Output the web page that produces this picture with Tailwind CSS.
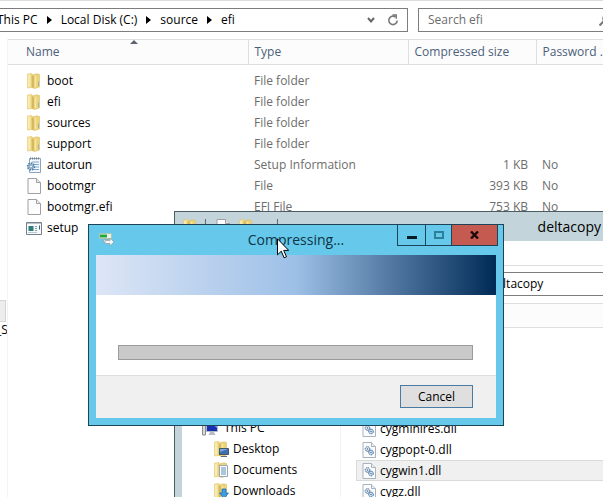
<!DOCTYPE html>
<html lang="en">
<head>
    <meta charset="UTF-8">
    <meta name="viewport" content="width=device-width, initial-scale=1.0">
    <title>efi</title>
    <script src="https://cdn.jsdelivr.net/npm/@tailwindcss/browser@4"></script>
</head>
<body class="relative h-screen overflow-hidden bg-white font-['Open_Sans','Noto_Sans',sans-serif] text-xs text-black">

    <!-- shared icons -->
    <svg class="hidden">
        <symbol id="folder" viewBox="0 0 16 16">
            <path d="M1.500 1l4.500-.5v14l-4.500.5z" fill="#f3df92" stroke="#e0c76f" stroke-width=".6"/>
            <path d="M6 2l5-1.200 2.500.7v12.500l-5 1.500-2.500-1z" fill="#ecd27a" stroke="#d8bd62" stroke-width=".6"/>
            <path d="M7 3v11.500" stroke="#c2a24a" stroke-width="1"/>
            <path d="M3 1.800v12" stroke="#f9eebc" stroke-width="1.500"/>
            <path d="M9.500 2.800v11.500" stroke="#f7e6a2" stroke-width="1.500"/>
            <path d="M12.500 8.500v4.500" stroke="#9ab4b4" stroke-width="1"/>
        </symbol>
        <symbol id="page" viewBox="0 0 16 16">
            <path d="M2 .5h8.500l4 4v11H2z" fill="#fdfdfd" stroke="#a0a0a0"/>
            <path d="M10.500.5v4h4" fill="#e8e8e8" stroke="#a0a0a0"/>
        </symbol>
        <symbol id="dll" viewBox="0 0 16 16">
            <path d="M2 .5h8.500l4 4v11H2z" fill="#fbfcfd" stroke="#a9b3bb"/>
            <path d="M10.500.5v4h4" fill="#e8edf0" stroke="#a9b3bb"/>
            <circle cx="6.500" cy="7" r="2.300" fill="#dbe8f3" stroke="#44698f" stroke-dasharray="1.500 .5"/>
            <circle cx="10" cy="10.500" r="2.300" fill="#dbe8f3" stroke="#2f5f95" stroke-dasharray="1.500 .5"/>
            <circle cx="6.500" cy="7" r=".7" fill="#44698f"/>
            <circle cx="10" cy="10.500" r=".7" fill="#2f5f95"/>
        </symbol>
        <symbol id="inf" viewBox="0 0 16 16">
            <path d="M3.500 1.500h11v14h-11z" fill="#f4f8fc" stroke="#8da5b8"/>
            <path d="M4 1.500h10" stroke="#6c7f90" stroke-width="2" stroke-dasharray="1 1"/>
            <path d="M6 5h7M9 7.500h4M9 10h4M7 12.500h6" stroke="#7fa8cd"/>
            <circle cx="5" cy="9.500" r="3.300" fill="#a9c6de" stroke="#5580a5" stroke-width="1.800" stroke-dasharray="1.500 1"/>
            <circle cx="5" cy="9.500" r="1.500" fill="#eef4f9" stroke="#5b83a6" stroke-width=".7"/>
        </symbol>
        <symbol id="exe" viewBox="0 0 16 16">
            <path d="M.5 2.500h15v12H.5z" fill="#f8f9f9" stroke="#76828a"/>
            <path d="M1 3.500h14" stroke="#b8c3c9" stroke-width="1"/>
            <path d="M2.500 6h5v5h-5z" fill="#2d7f7c"/>
            <path d="M9 6.500h2M9 8.500h2M9 10.500h2" stroke="#8a9ba8"/>
            <path d="M13.500 5.500v4" stroke="#35628a"/>
            <path d="M2 12.500h9" stroke="#bcc8ce"/>
        </symbol>
        <symbol id="crumb" viewBox="0 0 5 8"><path d="M0 0l5 4-5 4z" fill="#000"/></symbol>
    </svg>

    <!-- efi window -->
    <main class="flex h-full flex-col border-t border-[#dcdcdc] pt-[7px]">
        <div class="flex h-6 shrink-0 gap-[10px]">
            <nav class="flex w-[408px] items-center overflow-hidden border border-l-0 border-[#7d7d7d] pr-2">
                <a href="#" class="-ml-[3px] whitespace-nowrap">This PC</a>
                <svg class="mx-[9px] h-2 w-[5px] shrink-0"><use href="#crumb"/></svg>
                <a href="#" class="whitespace-nowrap">Local Disk (C:)</a>
                <svg class="mx-[9px] h-2 w-[5px] shrink-0"><use href="#crumb"/></svg>
                <a href="#">source</a>
                <svg class="mx-[9px] h-2 w-[5px] shrink-0"><use href="#crumb"/></svg>
                <a href="#">efi</a>
                <button type="button" aria-label="Previous locations" class="mr-3 ml-auto">
                    <svg class="h-2 w-2" viewBox="0 0 8 8" fill="none" stroke="#666" stroke-width="2"><path d="M1 2l3 3.500L7 2"/></svg>
                </button>
                <button type="button" aria-label="Refresh">
                    <svg class="h-3 w-3" viewBox="0 0 12 12" fill="none" stroke="#777" stroke-width="1.600"><path d="M8.500 3A4.200 4.200 0 1 0 10.200 6.500"/><path d="M5.500 1h3.800v3.800" stroke-width="1.400"/></svg>
                </button>
            </nav>
            <label class="-mr-3 flex min-w-0 flex-1 items-center border border-[#7d7d7d] pl-[9px]">
                <input type="search" aria-label="Search efi" placeholder="Search efi" class="min-w-0 flex-1 outline-none placeholder:text-[#6d6d6d]">
                <svg class="h-3 w-3 shrink-0 mr-[3px]" viewBox="0 0 12 12" fill="none" stroke="#777"><circle cx="7.500" cy="4.500" r="3.500" stroke-width="1.500"/><path d="M5 7l-4.500 4.500" stroke-width="2"/></svg>
            </label>
        </div>

        <div class="mt-[7px] flex min-h-0 flex-1">
            <aside class="w-2 shrink-0 overflow-hidden border-r border-[#f3f3f3] pt-[261px]">
                <div class="-ml-1 h-[22px] w-[10px] border border-[#d4d4d4] bg-[#ededed]"></div>
                <div class="-ml-1 whitespace-nowrap">_S</div>
            </aside>
            <div class="min-w-0 flex-1">
                <table class="w-full table-fixed whitespace-nowrap text-[#6d6d6d]">
                    <colgroup><col class="w-[240px]"><col class="w-[160px]"><col class="w-32"><col></colgroup>
                    <thead>
                        <tr class="h-[25px] border-y border-[#dedfe1] bg-[#fcfcfc] text-left text-[#4c607a]">
                            <th class="relative border-r border-[#dedfe1] pl-[18px] font-normal">Name
                                <svg class="absolute top-0 left-[122px] h-1 w-2" viewBox="0 0 8 4"><path d="M0 4l4-4 4 4z" fill="#5b6470"/></svg>
                            </th>
                            <th class="border-r border-[#dedfe1] pl-[6px] font-normal">Type</th>
                            <th class="border-r border-[#dedfe1] pl-[6px] font-normal">Compressed size</th>
                            <th class="pl-[6px] font-normal">Password ..</th>
                        </tr>
                    </thead>
                    <tbody>
                        <tr class="h-[6px]"><td colspan="4"></td></tr>
                        <tr class="h-[21px]">
                            <td class="pl-[18px] text-black"><span class="flex items-center gap-[5px]"><svg class="h-4 w-4"><use href="#folder"/></svg>boot</span></td>
                            <td class="pl-[6px]">File folder</td><td></td><td></td>
                        </tr>
                        <tr class="h-[21px]">
                            <td class="pl-[18px] text-black"><span class="flex items-center gap-[5px]"><svg class="h-4 w-4"><use href="#folder"/></svg>efi</span></td>
                            <td class="pl-[6px]">File folder</td><td></td><td></td>
                        </tr>
                        <tr class="h-[21px]">
                            <td class="pl-[18px] text-black"><span class="flex items-center gap-[5px]"><svg class="h-4 w-4"><use href="#folder"/></svg>sources</span></td>
                            <td class="pl-[6px]">File folder</td><td></td><td></td>
                        </tr>
                        <tr class="h-[21px]">
                            <td class="pl-[18px] text-black"><span class="flex items-center gap-[5px]"><svg class="h-4 w-4"><use href="#folder"/></svg>support</span></td>
                            <td class="pl-[6px]">File folder</td><td></td><td></td>
                        </tr>
                        <tr class="h-[21px]">
                            <td class="pl-[18px] text-black"><span class="flex items-center gap-[5px]"><svg class="h-4 w-4"><use href="#inf"/></svg>autorun</span></td>
                            <td class="pl-[6px]">Setup Information</td><td class="pr-2 text-right">1 KB</td><td class="pl-[6px]">No</td>
                        </tr>
                        <tr class="h-[21px]">
                            <td class="pl-[18px] text-black"><span class="flex items-center gap-[5px]"><svg class="h-4 w-4"><use href="#page"/></svg>bootmgr</span></td>
                            <td class="pl-[6px]">File</td><td class="pr-2 text-right">393 KB</td><td class="pl-[6px]">No</td>
                        </tr>
                        <tr class="h-[21px]">
                            <td class="pl-[18px] text-black"><span class="flex items-center gap-[5px]"><svg class="h-4 w-4"><use href="#page"/></svg>bootmgr.efi</span></td>
                            <td class="pl-[6px]">EFI File</td><td class="pr-2 text-right">753 KB</td><td class="pl-[6px]">No</td>
                        </tr>
                        <tr class="h-[21px]">
                            <td class="pl-[18px] text-black"><span class="flex items-center gap-[5px]"><svg class="h-4 w-4"><use href="#exe"/></svg>setup</span></td>
                            <td></td><td></td><td></td>
                        </tr>
                    </tbody>
                </table>
            </div>
        </div>
    </main>

    <!-- deltacopy window -->
    <section class="absolute top-[211px] right-0 bottom-0 left-[174px] flex flex-col border-t border-l border-[#4b5d61] bg-[#c3d5da] pl-[7px]">
        <header class="flex h-[29px] shrink-0 items-center">
            <div class="flex items-center gap-[7px] self-start pt-[7px]">
                <svg class="h-4 w-4"><use href="#folder"/></svg>
                <span class="h-4 w-px bg-[#5c6d72]"></span>
                <svg class="ml-[2px] h-4 w-4"><use href="#page"/></svg>
                <svg class="h-4 w-4"><use href="#folder"/></svg>
                <span class="ml-4 h-4 w-px bg-[#5c6d72]"></span>
            </div>
            <h2 class="ml-auto pr-[2px] text-sm">deltacopy</h2>
        </header>
        <div class="flex min-h-0 flex-1 flex-col bg-white">
            <div class="h-[25px] shrink-0 border-b border-[#dcdcdc]"></div>
            <nav class="mt-[6px] flex h-6 shrink-0 items-center border-y border-[#7d7d7d] pl-[307px]"><a href="#">deltacopy</a></nav>
            <div class="mt-[7px] flex min-h-0 flex-1">
                <ul class="w-[159px] shrink-0 overflow-hidden border-r border-[#f3f3f3] pt-[114px]">
                    <li class="flex h-[21px] items-center gap-[6px] pl-5">
                        <svg class="h-4 w-4" viewBox="0 0 16 16"><path d="M.5 3h3v12h-3z" fill="#d8d8d8" stroke="#8c8c8c"/><path d="M4.500 3.500h11v8h-11z" fill="#1a2fb0" stroke="#aebcc8"/><path d="M10 4h5v4z" fill="#6fa4ea"/><path d="M8 12h4l1.500 3h-7z" fill="#b7bcc4"/></svg>This PC
                    </li>
                    <li class="flex h-[21px] items-center gap-1 pl-[31px]">
                        <svg class="h-4 w-4" viewBox="0 0 16 16"><use href="#folder"/><path d="M6.500 7.500h9v6h-9z" fill="#3b6fae" stroke="#44566b"/><path d="M7 8h8l-8 3z" fill="#79a5d8"/><path d="M8 15.500h6" stroke="#5d6a78"/></svg>Desktop
                    </li>
                    <li class="flex h-[21px] items-center gap-1 pl-[31px]">
                        <svg class="h-4 w-4" viewBox="0 0 16 16"><use href="#folder"/><path d="M6.500 3.500h8v11h-8z" fill="#fafcfd" stroke="#9aa7b2"/><path d="M8 6h5M8 8h5M8 10h5M8 12h5" stroke="#5f8fbd"/></svg>Documents
                    </li>
                    <li class="flex h-[21px] items-center gap-1 pl-[31px]">
                        <svg class="h-4 w-4" viewBox="0 0 16 16"><use href="#folder"/><path d="M9 6h4v4h2.500L11 15.500 6.500 10H9z" fill="#3b9ede" stroke="#1f70ad" stroke-width=".8"/></svg>Downloads
                    </li>
                </ul>
                <div class="min-w-0 flex-1">
                    <div class="h-[25px] border-y border-[#dedfe1] bg-[#fcfcfc]"></div>
                    <ul class="pt-[90px] pl-[15px]">
                        <li class="flex h-[21px] items-center gap-[3px] pl-[5px]"><svg class="h-4 w-4"><use href="#dll"/></svg>cygminires.dll</li>
                        <li class="flex h-[21px] items-center gap-[3px] pl-[5px]"><svg class="h-4 w-4"><use href="#dll"/></svg>cygpopt-0.dll</li>
                        <li class="flex h-[21px] items-center gap-[3px] border border-r-0 border-[#dadada] bg-[#f0f0f0] pl-1"><svg class="h-4 w-4"><use href="#dll"/></svg>cygwin1.dll</li>
                        <li class="flex h-[21px] items-center gap-[3px] pl-[5px]"><svg class="h-4 w-4"><use href="#dll"/></svg>cygz.dll</li>
                    </ul>
                </div>
            </div>
        </div>
    </section>

    <!-- progress dialog -->
    <section role="dialog" aria-labelledby="dialog-title" class="absolute top-[224px] left-[88px] w-[416px] border border-[#1d4456] bg-[#66c8ea] px-[7px] pb-[7px]">
        <header class="relative flex h-[30px] items-center justify-center">
            <svg class="absolute top-[7px] left-[3px] h-4 w-4" viewBox="0 0 16 16">
                <path d="M.5 1.500h12v5H.5z" fill="#e9f3ec" stroke="#a9c7b5"/>
                <path d="M1 2.500h7v3H1z" fill="#25a53a"/>
                <path d="M4.500 7.500h6v3h-6z" fill="#e4e8ea" stroke="#8fa0a8" stroke-width=".7"/>
                <path d="M6 8.500h5V6l4 4-4 4v-2.500H6z" fill="#f5f5f5" stroke="#8aa0a9" stroke-width=".7"/>
            </svg>
            <h1 id="dialog-title" class="text-sm text-[#0d3446]">Compressing...</h1>
            <div class="absolute top-0 -right-[2px] flex h-[21px] border border-t-0 border-[#1d4456]">
                <button type="button" aria-label="Minimize" class="flex w-[28px] items-center justify-center border-r border-[#1d4456]">
                    <svg class="h-[10px] w-[10px]" viewBox="0 0 10 10"><path d="M0 6h10v3H0z" fill="#061a24"/></svg>
                </button>
                <button type="button" aria-label="Maximize" class="flex w-[26px] items-center justify-center border-r border-[#1d4456]">
                    <svg class="h-2 w-[10px]" viewBox="0 0 10 8"><path d="M1 1h8v6H1z" fill="none" stroke="#2b7f9b" stroke-width="2"/></svg>
                </button>
                <button type="button" aria-label="Close" class="flex w-[45px] items-center justify-center bg-[#c55a50]">
                    <svg class="h-2 w-[9px]" viewBox="0 0 9 8"><path d="M1 .5l7 7M8 .5l-7 7" stroke="#1c0b0a" stroke-width="2.400"/></svg>
                </button>
            </div>
        </header>
        <div class="h-10 bg-linear-to-r/srgb from-[#dde6f6] via-[#9dc0e7] to-[#002a56]"></div>
        <div class="h-20 bg-white pt-[50px] pr-[23px] pl-[22px]">
            <progress aria-label="Compressing" value="0" max="100" class="block h-[15px] w-full appearance-none border border-[#9b9b9b] [&::-webkit-progress-bar]:bg-[#c9c9c9]"></progress>
        </div>
        <footer class="flex justify-end border-t border-[#dfdfdf] bg-[#f0f0f0] pt-[9px] pr-[23px] pb-[10px] pl-[22px]">
            <button type="button" class="h-[23px] w-[73px] border border-[#4a7ba5] bg-[#dfdfdf]">Cancel</button>
        </footer>
    </section>

    <!-- mouse pointer -->
    <svg class="absolute top-[238px] left-[277px] h-[21px] w-3" viewBox="0 0 12 21">
        <path d="M.5.8v16l3.800-3.600 2.800 6.600 2.400-1-2.800-6.400h5z" fill="#fff" stroke="#000"/>
    </svg>
</body>
</html>
